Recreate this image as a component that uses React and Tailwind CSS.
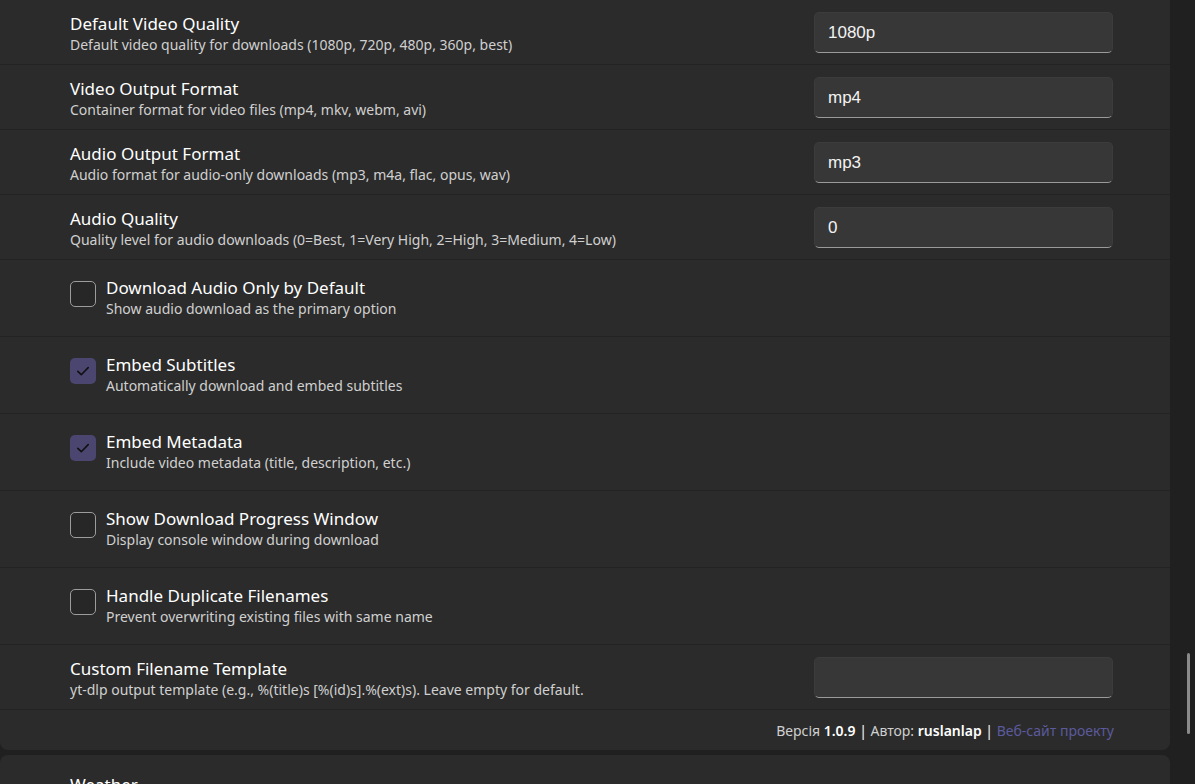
import React from "react";

const font = { fontFamily: '"Segoe UI", "Noto Sans", "Open Sans", sans-serif' };

function TextRow({ title, desc, value }) {
  return (
    <div className="flex items-center justify-between h-[65px] border-b border-[#232323] pl-[70px] pr-[57px]">
      <div className="flex flex-col mt-[4px]">
        <div className="text-[17px] leading-[21px] text-white">{title}</div>
        <div className="text-[14px] leading-[21px] text-[#d0d0d0]">{desc}</div>
      </div>
      <div className="w-[299px] h-[41px] rounded-[5px] bg-[#373737] border border-[#3c3c3c] border-b-[#9a9a9a] flex items-center px-[13px] pt-[2px]">
        <span className="text-[17px] text-[#f2f2f2] font-['Liberation_Sans',Arial,sans-serif]">{value}</span>
      </div>
    </div>
  );
}

function CheckRow({ title, desc, checked }) {
  return (
    <div className="flex items-start h-[77px] border-b border-[#232323] pl-[70px] pt-[21px]">
      {checked ? (
        <div className="w-[26px] h-[26px] rounded-[5px] bg-[#4b4670] flex items-center justify-center">
          <svg width="16" height="16" viewBox="0 0 16 16" fill="none">
            <path d="M2.8 8.4 L6.3 11.7 L13.2 4.6" stroke="#101010" strokeWidth="1.6" strokeLinecap="round" strokeLinejoin="round" />
          </svg>
        </div>
      ) : (
        <div className="w-[26px] h-[26px] rounded-[5px] border border-[#9c9c9c] bg-[#272727]" />
      )}
      <div className="flex flex-col ml-[10px] -mt-[4px]">
        <div className="text-[17px] leading-[21px] text-white">{title}</div>
        <div className="text-[14px] leading-[22px] text-[#d0d0d0]">{desc}</div>
      </div>
    </div>
  );
}

export default function App() {
  return (
    <div className="h-[784px] overflow-hidden bg-[#202020] flex" style={font}>
      <div className="w-[1170px] flex flex-col gap-[5px] shrink-0">
        <div className="bg-[#2b2b2b] rounded-b-lg">
          <TextRow title="Default Video Quality" desc="Default video quality for downloads (1080p, 720p, 480p, 360p, best)" value="1080p" />
          <TextRow title="Video Output Format" desc="Container format for video files (mp4, mkv, webm, avi)" value="mp4" />
          <TextRow title="Audio Output Format" desc="Audio format for audio-only downloads (mp3, m4a, flac, opus, wav)" value="mp3" />
          <TextRow title="Audio Quality" desc="Quality level for audio downloads (0=Best, 1=Very High, 2=High, 3=Medium, 4=Low)" value="0" />
          <CheckRow title="Download Audio Only by Default" desc="Show audio download as the primary option" checked={false} />
          <CheckRow title="Embed Subtitles" desc="Automatically download and embed subtitles" checked />
          <CheckRow title="Embed Metadata" desc="Include video metadata (title, description, etc.)" checked />
          <CheckRow title="Show Download Progress Window" desc="Display console window during download" checked={false} />
          <CheckRow title="Handle Duplicate Filenames" desc="Prevent overwriting existing files with same name" checked={false} />
          <TextRow title="Custom Filename Template" desc="yt-dlp output template (e.g., %(title)s [%(id)s].%(ext)s). Leave empty for default." value="" />
          <div className="h-[40px] flex items-center justify-end pr-[56px] text-[14px] text-[#d0d0d0]">
            <span>
              Версія <span className="font-semibold text-white">1.0.9</span> <span className="text-white">|</span> Автор:{" "}
              <span className="font-semibold text-white">ruslanlap</span> <span className="text-white">|</span>{" "}
              <span className="text-[#5b5a9c]">Веб-сайт проекту</span>
            </span>
          </div>
        </div>
        <div className="bg-[#2b2b2b] rounded-t-lg h-[60px] pl-[70px] pt-[19px]">
          <div className="text-[17px] leading-[21px] text-white">Weather</div>
        </div>
      </div>
      <div className="flex-1 flex justify-end pr-[5px] pt-[653px]">
        <div className="w-[3px] h-[81px] rounded-full bg-[#8a8a8a]" />
      </div>
    </div>
  );
}
